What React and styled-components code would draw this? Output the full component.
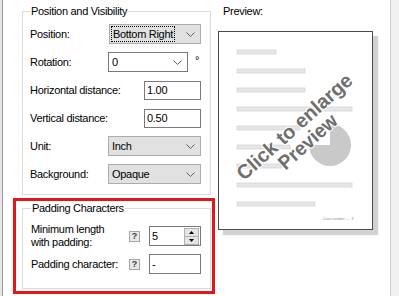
import React from 'react';
import styled, { createGlobalStyle } from 'styled-components';

const GlobalStyle = createGlobalStyle`
  html, body {
    margin: 0;
    padding: 0;
    background: #fff;
  }

  body {
    font-family: "Liberation Sans", Arial, sans-serif;
    font-size: 11px;
    letter-spacing: -0.3px;
    color: #000;
  }
`;

const Screen = styled.div`
  position: relative;
  display: flex;
  width: 399px;
  height: 296px;
  overflow: hidden;
  background: #fff;
`;

const LeftEdge = styled.div`
  width: 2px;
  background: #e6e6e6;
  border-right: 1px solid #9a9a9a;
`;

const RightEdge = styled.div`
  width: 8px;
  background: #f0f0f0;
  border-left: 1px solid #d2d2d2;
`;

const Settings = styled.div`
  display: flex;
  flex-direction: column;
  gap: 7px;
  padding: 5px 0 0 19px;
`;

const Group = styled.fieldset`
  box-sizing: border-box;
  width: 189px;
  margin: 0;
  padding: ${p => p.$top}px 9px ${p => p.$bottom}px ${p => p.$left}px;
  border: 1px solid #dcdcdc;
  min-inline-size: 0;
`;

const Legend = styled.legend`
  padding: 0 1px;
  font-size: 11px;
  line-height: 13px;
`;

const Fields = styled.div`
  display: grid;
  grid-auto-rows: ${p => p.$row};
  row-gap: ${p => p.$gap}px;
`;

const Row = styled.div`
  display: flex;
  align-items: center;
  justify-content: space-between;
`;

const Label = styled.span`
  white-space: nowrap;
  line-height: 13px;
`;

const DropButton = styled.div`
  box-sizing: border-box;
  display: flex;
  align-items: center;
  width: ${p => p.$w}px;
  height: 20px;
  padding: 0 5px 0 ${p => (p.$focused ? 1 : 3)}px;
  background: ${p => (p.$editable ? '#fff' : '#e1e1e1')};
  border: 1px solid ${p => (p.$editable ? '#7a7a7a' : '#adadad')};
`;

const FocusRing = styled.span`
  display: flex;
  align-items: center;
  height: 14px;
  padding: 0 1px;
  border: 1px dotted #000;
`;

const ChevronBox = styled.svg`
  margin-left: auto;
  flex-shrink: 0;
`;

const Chevron = () => (
  <ChevronBox width="9" height="5" viewBox="0 0 9 5">
    <polyline points="0.5,0.5 4.5,4.5 8.5,0.5" fill="none" stroke="#606060" strokeWidth="1" />
  </ChevronBox>
);

const Inline = styled.div`
  display: flex;
  align-items: center;
  gap: ${p => p.$gap || 0}px;
`;

const Degree = styled.span`
  width: 13px;
  text-align: right;
  padding-right: 2px;
  box-sizing: border-box;
  align-self: flex-start;
  margin-top: 2px;
`;

const TextBox = styled.div`
  box-sizing: border-box;
  display: flex;
  align-items: center;
  width: ${p => p.$w}px;
  height: ${p => p.$h || 19}px;
  padding-left: 2px;
  background: #fff;
  border: 1px solid #7a7a7a;
`;

const HelpButton = styled.span`
  box-sizing: border-box;
  display: flex;
  align-items: center;
  justify-content: center;
  width: 11px;
  height: 11px;
  background: #e8e8e8;
  border: 1px solid #a6a6a6;
  font-size: 9px;
  font-weight: bold;
  letter-spacing: 0;
  color: #3a3a3a;
`;

const SpinBox = styled(TextBox)`
  padding-right: 1px;
`;

const SpinValue = styled.span`
  flex: 1;
`;

const Spinner = styled.div`
  display: flex;
  flex-direction: column;
  width: 15px;
  height: 17px;
`;

const SpinButton = styled.div`
  flex: 1;
  display: flex;
  align-items: center;
  justify-content: center;
  background: #e5e5e5;
  border: 1px solid #b0b0b0;
  & + & {
    border-top: none;
  }
`;

const Arrow = ({ up }) => (
  <svg width="5" height="3" viewBox="0 0 5 3">
    <polygon points={up ? '0,3 5,3 2.5,0' : '0,0 5,0 2.5,3'} fill="#000" />
  </svg>
);

const PreviewPane = styled.div`
  display: flex;
  flex-direction: column;
  flex: 1;
  padding: 5px 0 0 7px;
`;

const PreviewLabel = styled.div`
  line-height: 13px;
  padding-left: 5px;
`;

const Page = styled.div`
  box-sizing: border-box;
  width: 155px;
  height: 199px;
  margin-top: 13px;
  background: #fff;
  border: 1px solid #4a4a4a;
  box-shadow: 5px 5px 1px #d2d2d2;
`;

const Highlight = styled.div`
  position: absolute;
  left: 13px;
  top: 198px;
  width: 202px;
  height: 96px;
  box-sizing: border-box;
  border: 3px solid #e3161e;
  pointer-events: none;
`;

const bars = [
  [20, 39], [39, 68], [58, 68], [77, 115], [96, 63],
  [115, 53], [134, 45], [153, 115], [172, 78],
];

const PageThumb = () => (
  <svg width="153" height="197" viewBox="0 0 153 197" style={{ display: 'block' }}>
    {bars.map(([y, w]) => (
      <rect key={y} x="18" y={y - 2} width={w} height="4" fill="#e6e6e6" stroke="#d4d4d4" strokeWidth="0.8" />
    ))}
    <path d="M111,113 L111,92 A21,21 0 1 1 90,113 Z" fill="#c9c9c9" />
    <text x="104" y="188" fontSize="3.6" fill="#8a8a8a" fontFamily="Liberation Sans, sans-serif" letterSpacing="0">
      Case number ..... 3
    </text>
    <g
      transform="translate(82 102) rotate(-42)"
      fontFamily="Liberation Sans, Arial, sans-serif"
      fontWeight="bold"
      fontSize="20"
      fill="#6e6e6e"
      stroke="#fff"
      strokeWidth="2"
      paintOrder="stroke"
      textAnchor="middle"
      letterSpacing="0"
    >
      <text x="0" y="-3" textLength="148" lengthAdjust="spacingAndGlyphs">Click to enlarge</text>
      <text x="0" y="17" textLength="72" lengthAdjust="spacingAndGlyphs">Preview</text>
    </g>
  </svg>
);

const App = () => {
  return (
    <Screen>
      <GlobalStyle />
      <LeftEdge />
      <Settings>
        <Group $top={6} $bottom={10} $left={7}>
          <Legend>Position and Visibility</Legend>
          <Fields $row="20px" $gap={8}>
            <Row>
              <Label>Position:</Label>
              <DropButton $w={92} $focused>
                <FocusRing>Bottom Right</FocusRing>
                <Chevron />
              </DropButton>
            </Row>
            <Row>
              <Label>Rotation:</Label>
              <Inline>
                <DropButton $w={80} $editable>
                  0
                  <Chevron />
                </DropButton>
                <Degree>°</Degree>
              </Inline>
            </Row>
            <Row>
              <Label>Horizontal distance:</Label>
              <TextBox $w={57}>1.00</TextBox>
            </Row>
            <Row>
              <Label>Vertical distance:</Label>
              <TextBox $w={57}>0.50</TextBox>
            </Row>
            <Row>
              <Label>Unit:</Label>
              <DropButton $w={93}>
                Inch
                <Chevron />
              </DropButton>
            </Row>
            <Row>
              <Label>Background:</Label>
              <DropButton $w={93}>
                Opaque
                <Chevron />
              </DropButton>
            </Row>
          </Fields>
        </Group>

        <Group $top={8} $bottom={14} $left={8}>
          <Legend>Padding Characters</Legend>
          <Fields $row="auto" $gap={5}>
            <Row>
              <Label>
                Minimum length
                <br />
                with padding:
              </Label>
              <Inline $gap={9}>
                <HelpButton>?</HelpButton>
                <SpinBox $w={52} $h={20}>
                  <SpinValue>5</SpinValue>
                  <Spinner>
                    <SpinButton><Arrow up /></SpinButton>
                    <SpinButton><Arrow /></SpinButton>
                  </Spinner>
                </SpinBox>
              </Inline>
            </Row>
            <Row>
              <Label>Padding character:</Label>
              <Inline $gap={9}>
                <HelpButton>?</HelpButton>
                <TextBox $w={52} $h={20}>-</TextBox>
              </Inline>
            </Row>
          </Fields>
        </Group>
      </Settings>

      <PreviewPane>
        <PreviewLabel>Preview:</PreviewLabel>
        <Page>
          <PageThumb />
        </Page>
      </PreviewPane>
      <RightEdge />

      <Highlight />
    </Screen>
  );
};

export default App;
